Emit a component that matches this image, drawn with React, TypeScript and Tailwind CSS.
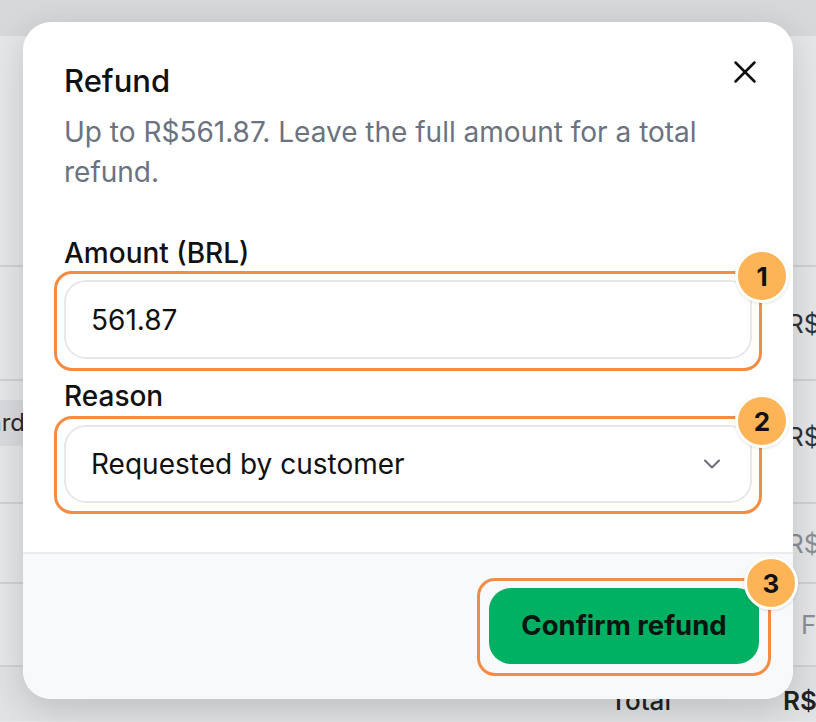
import { ChevronDown, X } from 'lucide-react';

function Marker({ n, className }: { n: number; className: string }) {
  return (
    <div className={`pointer-events-none absolute rounded-[18px] border-[3px] border-[#f28c45] ${className}`}>
      <div className="absolute -right-[30px] -top-[25px] flex h-[54px] w-[54px] items-center justify-center rounded-full border-[3px] border-white bg-[#fdb457] text-[26px] font-bold text-[#111] shadow-[0_1px_3px_rgba(0,0,0,0.12)]">
        {n}
      </div>
    </div>
  );
}

function BackdropRow({
  h,
  left,
  right,
  rightClass,
}: {
  h: string;
  left?: string;
  right: string;
  rightClass: string;
}) {
  return (
    <div className={`flex border-t-2 border-[#d0d2d5] ${h}`}>
      <div className="flex w-[25px] shrink-0 items-start justify-end overflow-hidden pt-[19px]">
        {left && (
          <span className="whitespace-nowrap bg-[#dadbde] py-[9px] text-[24px] leading-[28px] text-[#2a2a2a]">
            {left}
          </span>
        )}
      </div>
      <div className="flex-1" />
      <div className={`flex w-[29px] shrink-0 items-center overflow-hidden whitespace-nowrap text-[26px] ${rightClass}`}>
        {right}
      </div>
    </div>
  );
}

export default function App() {
  return (
    <div className="relative h-[722px] w-[816px] overflow-hidden bg-[#e6e7e9] font-['Inter',sans-serif]">
      {/* page behind the dialog */}
      <div className="flex flex-col">
        <div className="h-[36px] bg-[#d6d8da]" />
        <div className="h-[229px]" />
        <BackdropRow h="h-[114px]" right="R$ 561,87" rightClass="text-[#333]" />
        <BackdropRow h="h-[123px]" left="Standard" right="R$ 561,87" rightClass="text-[#333] -mt-[10px]" />
        <BackdropRow h="h-[80px]" right="R$ 0,00" rightClass="text-[#8b8f95]" />
        <BackdropRow h="h-[83px]" right="Frete" rightClass="text-[#8b8f95] pl-[14px]" />
        <div className="flex h-[56px] border-t-2 border-[#d0d2d5] bg-[#e1e2e4]">
          <div className="w-[610px] shrink-0" />
          <div className="flex items-end pb-[1px] text-[26px] font-medium text-[#222]">Total</div>
          <div className="ml-[112px] flex items-end whitespace-nowrap pb-[1px] text-[26px] font-semibold text-[#222]">R$ 561,87</div>
        </div>
      </div>

      {/* dialog */}
      <div className="absolute left-[23px] top-[22px] flex h-[677px] w-[770px] flex-col rounded-[28px] bg-white shadow-[0_10px_36px_rgba(0,0,0,0.16)]">
        <div className="relative px-[41px] pb-[49px] pt-[39px]">
          <h2 className="text-[31px] font-medium leading-[40px] text-[#111]">Refund</h2>
          <button className="absolute right-[29px] top-[31px] flex h-[38px] w-[38px] items-center justify-center text-[#111]">
            <X size={38} strokeWidth={1.6} />
          </button>
          <p className="mt-[11px] text-[28px] leading-[40px] text-[#6b7280]">
            Up to R$561.87. Leave the full amount for a total refund.
          </p>

          <label className="mt-[44px] block text-[28px] font-medium leading-[35px] text-[#111]">Amount (BRL)</label>
          <div className="relative mt-[9px]">
            <div className="flex h-[79px] items-center rounded-[22px] border-2 border-[#e6e7ea] px-[25px] text-[28px] text-[#111]">
              561.87
            </div>
            <Marker n={1} className="-bottom-[12px] -left-[10px] -right-[10px] -top-[9px]" />
          </div>

          <label className="mt-[20px] block text-[28px] font-medium leading-[35px] text-[#111]">Reason</label>
          <div className="relative mt-[11px]">
            <div className="flex h-[78px] items-center justify-between rounded-[22px] border-2 border-[#e6e7ea] pl-[25px] pr-[24px] text-[28px] text-[#111]">
              <span>Requested by customer</span>
              <ChevronDown size={28} strokeWidth={1.8} className="text-[#6b6f76]" />
            </div>
            <Marker n={2} className="-bottom-[11px] -left-[10px] -right-[10px] -top-[9px]" />
          </div>
        </div>

        <div className="flex flex-1 items-start justify-end rounded-b-[28px] border-t-2 border-[#ebecee] bg-[#f8f9fa] pb-[35px] pr-[34px] pt-[34px]">
          <div className="relative">
            <button className="flex h-[76px] w-[270px] items-center justify-center rounded-[22px] bg-[#00b063] text-[27.5px] font-bold text-[#0b1510]">
              Confirm refund
            </button>
            <Marker n={3} className="-bottom-[12px] -left-[12px] -right-[12px] -top-[10px]" />
          </div>
        </div>
      </div>
    </div>
  );
}
